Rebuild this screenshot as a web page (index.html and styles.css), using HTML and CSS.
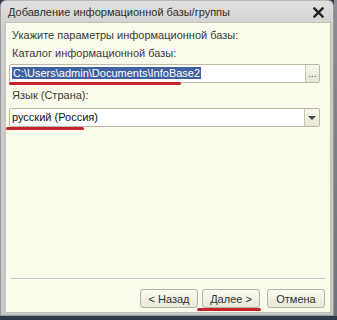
FILE: index.html
```html
<!DOCTYPE html>
<html>
<head>
<meta charset="utf-8">
<link rel="stylesheet" href="styles.css">
</head>
<body>
<div class="screen">
  <div class="window">
    <div class="titlebar">
      <span class="title">Добавление информационной базы/группы</span>
      <svg class="close" width="11" height="11" viewBox="0 0 11 11"><path d="M1.5 1.5 L9.5 9.5 M9.5 1.5 L1.5 9.5" stroke="#1e1e1e" stroke-width="2.4" stroke-linecap="square"/></svg>
    </div>
    <div class="panel">
      <div class="hint">Укажите параметры информационной базы:</div>
      <div class="label">Каталог информационной базы:</div>
      <div class="field">
        <div class="field-text"><span class="sel">C:\Users\admin\Documents\InfoBase2</span></div>
        <div class="field-btn dots">...</div>
        <div class="mark mark-path"></div>
      </div>
      <div class="label lang">Язык (Страна):</div>
      <div class="field">
        <div class="field-text">русский (Россия)</div>
        <div class="field-btn"><span class="tri"></span></div>
        <div class="mark mark-lang"></div>
      </div>
      <div class="spacer"></div>
      <div class="sep"></div>
      <div class="buttons">
        <div class="btn">&lt; Назад</div>
        <div class="btn btn-next">Далее &gt;<div class="mark mark-next"></div></div>
        <div class="btn btn-cancel">Отмена</div>
      </div>
    </div>
  </div>
  <div class="side"></div>
</div>
</body>
</html>
```
FILE: styles.css
```css
html, body {
  margin: 0;
  padding: 0;
}
body {
  width: 337px;
  height: 320px;
  background: #2f3a48;
  font-family: "Liberation Sans", Arial, sans-serif;
  font-size: 11px;
  color: #3a3a3a;
  overflow: hidden;
}
.screen {
  display: flex;
  width: 337px;
  height: 320px;
}
.window {
  width: 334px;
  height: 316px;
  background: linear-gradient(#e0e0e0, #cdcdcd 30px, #c8c8c8);
  border-radius: 6px 6px 0 0;
  box-sizing: border-box;
  border: 1px solid #9a9a9a;
  border-top-color: #b8b8b8;
  display: flex;
  flex-direction: column;
}
.side {
  flex: 1;
  height: 316px;
  background: linear-gradient(#8a8e94, #6c737c);
}
.titlebar {
  height: 20px;
  display: flex;
  align-items: center;
  justify-content: space-between;
  padding: 1px 9px 0 7px;
  color: #2e2e2e;
}
.title {
  font-size: 11px;
}
.close {
  display: block;
}
.panel {
  flex: 1;
  margin: 0 2px 2px 4px;
  background: #fafbeb;
  border: 1px solid #c2c2b2;
  display: flex;
  flex-direction: column;
  padding: 0 5px 0 2px;
}
.hint {
  padding: 6px 0 0 4px;
  height: 19px;
  box-sizing: border-box;
}
.label {
  padding: 5px 0 0 4px;
  height: 19px;
  box-sizing: border-box;
}
.lang {
  padding-top: 6px;
  height: 22px;
}
.field {
  position: relative;
  margin: 3px 5px 0 1px;
  height: 17px;
  display: flex;
  border: 1px solid #b9b9a6;
  border-radius: 2px;
  background: #fff;
}
.field-text {
  flex: 1;
  padding: 1px 2px;
  line-height: 14px;
  white-space: nowrap;
  color: #111;
}
.sel {
  background: #40609f;
  color: #fff;
  padding: 0 1px;
}
.field-btn {
  width: 14px;
  border-left: 1px solid #c9c9b8;
  background: linear-gradient(#f6f6ea, #e6e6d6);
  display: flex;
  align-items: center;
  justify-content: center;
}
.dots {
  font-size: 10px;
  line-height: 10px;
  color: #555;
  align-items: flex-end;
  padding-bottom: 3px;
  box-sizing: border-box;
}
.tri {
  width: 0;
  height: 0;
  border-left: 4px solid transparent;
  border-right: 4px solid transparent;
  border-top: 4px solid #444;
}
.mark {
  position: absolute;
  height: 3px;
  border-radius: 2px;
  background: #c8222c;
}
.mark-path {
  left: -1px;
  top: 17px;
  width: 172px;
}
.mark-lang {
  left: -4px;
  top: 18px;
  width: 78px;
}
.spacer {
  flex: 1;
}
.sep {
  height: 1px;
  background: #c9c9b8;
  border-bottom: 1px solid #fff;
  margin: 0 0 0 3px;
}
.buttons {
  display: flex;
  justify-content: flex-end;
  gap: 4px;
  padding: 9px 0 4px 0;
}
.btn {
  position: relative;
  width: 56px;
  height: 17px;
  border: 1px solid #b4b4a4;
  border-radius: 3px;
  background: linear-gradient(#fbfbf2, #e8e8d8);
  display: flex;
  align-items: center;
  justify-content: center;
  color: #333;
}
.btn-cancel {
  margin-left: 3px;
}
.mark-next {
  left: -6px;
  top: 18px;
  width: 64px;
}
```
